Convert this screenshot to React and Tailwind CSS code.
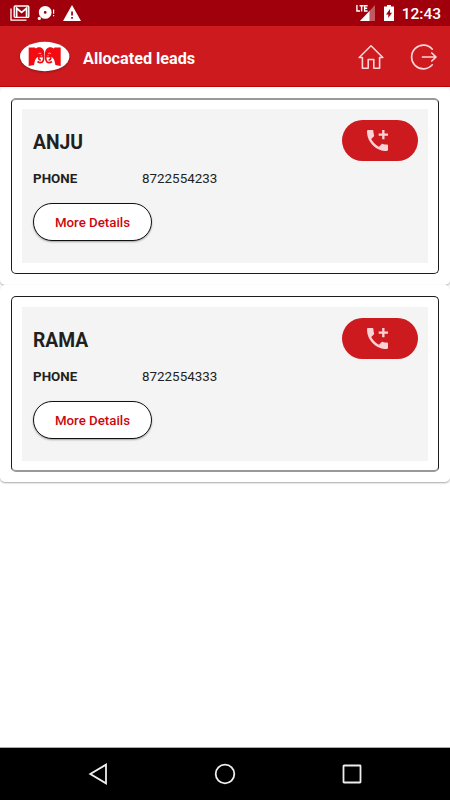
import clsx from "clsx";

const leads = [
  { id: 1, name: "ANJU", phone: "8722554233" },
  { id: 2, name: "RAMA", phone: "8722554333" },
];

const StatusBar = () => (
  <div className="flex h-[26px] shrink-0 items-center justify-between bg-[#9f000b] pl-[10px] pr-[9px] text-white">
    <div className="flex items-center">
      <svg width="20" height="16" viewBox="0 0 20 16" fill="none" stroke="currentColor">
        <path d="M1 3.5V15.2h15.5" strokeWidth="1.3" />
        <rect x="4.2" y="1" width="14.6" height="11.4" rx="1" strokeWidth="1.4" />
        <path d="M6.6 12V3.2l5 4.2 5-4.2V12" strokeWidth="1.8" />
      </svg>
      <svg width="18" height="16" viewBox="0 0 18 16" className="ml-[7px]" fill="currentColor">
        <path fillRule="evenodd" d="M8.2 1a6.4 6.4 0 1 1 0 12.8A6.4 6.4 0 0 1 8.2 1Zm0 5a1.4 1.4 0 1 0 0 2.8 1.4 1.4 0 0 0 0-2.8Z" />
        <circle cx="2.3" cy="13.4" r="1.6" />
        <path d="M16 4.5h1.2v4.2H16zM16 10h1.2v1.3H16z" />
      </svg>
      <svg width="18" height="16" viewBox="0 0 18 16" className="ml-2" fill="currentColor">
        <path fillRule="evenodd" d="M9 0l9 16H0L9 0Zm-.8 6.5v4h1.7v-4H8.2Zm0 5.5v1.7h1.7V12H8.2Z" />
      </svg>
    </div>
    <div className="flex items-center">
      <svg width="20" height="18" viewBox="0 0 20 18" fill="currentColor">
        <path d="M19 1v16H4L19 1Z" opacity=".35" />
        <path d="M13.5 6.9V17H4l9.5-10.1Z" />
        <path d="M.9 1v6H4M3.6 1.7h4M5.6 1.7V7.5M11.6 1.7H8.6V7h3M8.6 4.3h2.6" fill="none" stroke="currentColor" strokeWidth="1.4" />
      </svg>
      <svg width="10" height="16" viewBox="0 0 10 16" className="ml-2" fill="currentColor">
        <path fillRule="evenodd" d="M3 0h4v1.5h3V16H0V1.5h3V0Zm3 4L2 9.5h2.3V13L8 7.7H6V4Z" />
      </svg>
      <span className="ml-[8px] mt-[3px] text-[15.5px] font-medium leading-none">12:43</span>
    </div>
  </div>
);

const Logo = () => (
  <svg width="54" height="36" viewBox="0 0 54 36" className="drop-shadow-[0_1px_1px_rgba(0,0,0,0.3)]">
    <ellipse cx="26.7" cy="17.5" rx="24.7" ry="14.7" fill="#fff" />
    {/* two elephant heads facing each other, the right one mirrored */}
    <g id="head">
      <path
        d="M10.7 8.6h6.2l.8.8c1.200-.9 2.300-1.200 3.400-1.200 3.100 0 5.300 2.500 5.300 6.300v3.300l-3 .8-3-.7c-2 .3-3.400 2.500-3.900 5.700l-.5 2.500-5.300.9V8.600Z"
        fill="#f20c12"
      />
      <path d="M21 18c-.8 2 .3 3 1.800 2.800M25.500 17c.6 4-.6 6.600-3 6.600-1.300 0-2.200-.4-3-1.100" fill="none" stroke="#f20c12" strokeWidth="1.700" />
      <path d="M20.500 14.600c.9-.5 1.800-.5 2.700-.1M22.800 16.800h1.200" fill="none" stroke="#fff" strokeWidth=".7" />
    </g>
    <use href="#head" transform="matrix(-1 0 0 1 53.4 0)" />
  </svg>
);

const AppBar = () => (
  <header className="flex h-[61px] shrink-0 items-center border-b border-[#bd050b] bg-[#cc1a1f] pl-[18px] pr-[12px] pt-[2px] text-white">
    <Logo />
    <h1 className="ml-[11px] mt-[4px] text-[16.2px] font-bold leading-none">Allocated leads</h1>
    <div className="ml-auto flex items-center text-[#ffd5d7]">
      <svg width="26" height="26" viewBox="0 0 26 26" fill="none" stroke="currentColor" strokeWidth="1.6">
        <path d="M1.2 13.5 13 1.8l11.8 11.7h-3.2V24.2h-5.8v-8.7h-5.6v8.7H4.4V13.5H1.2Z" strokeLinejoin="round" />
      </svg>
      <svg width="28" height="26" viewBox="0 0 28 26" className="ml-[26px]" fill="none" stroke="currentColor" strokeWidth="1.7" strokeLinecap="round" strokeLinejoin="round">
        <path d="M22.3 5.2A11.8 11.8 0 1 0 22.3 20.8M12.5 13h13M21.8 9l4.2 4-4.2 4" />
      </svg>
    </div>
  </header>
);

const LeadCard = ({ lead, first }) => (
  <section
    className={clsx(
      "rounded-[5px] bg-white px-[11px] pt-[11px] shadow-[0_1px_2px_rgba(0,0,0,0.35)]",
      first ? "h-[198px]" : "h-[197px]"
    )}
  >
    <div
      className={clsx(
        "h-[176px] rounded-[5px] border border-[#1c1c1f] px-[10px]",
        first ? "border-t-2 border-t-[#999] pt-[9px]" : "border-b-2 border-b-[#999] pt-[10px]"
      )}
    >
      <div className="h-[154px] bg-[#f4f4f4] pl-[11px] pr-[10px] pt-[11px]">
        <div className="flex items-start justify-between">
          <h2 className="mt-[10px] text-[19.3px] font-bold leading-[25px] text-[#231f20]">{lead.name}</h2>
          <button type="button" className="flex h-[41px] w-[76px] items-center justify-center rounded-full bg-[#cc1a1f]" aria-label="Call">
            <svg width="21" height="21" viewBox="3 3 18 18" className="-ml-[6px]" fill="#fbd3d6">
              <path d="M20 15.5c-1.25 0-2.45-.2-3.57-.57-.35-.11-.74-.03-1.02.24l-2.2 2.2a15.05 15.05 0 0 1-6.59-6.58l2.2-2.21c.28-.27.36-.66.25-1.01A11.36 11.36 0 0 1 8.5 4c0-.55-.45-1-1-1H4c-.55 0-1 .45-1 1 0 9.39 7.61 17 17 17 .55 0 1-.45 1-1v-3.5c0-.55-.45-1-1-1Z" />
              <path d="M21 6h-3V3h-2v3h-3v2h3v3h2V8h3z" />
            </svg>
          </button>
        </div>
        <div className="mt-[10px] flex text-[13.4px] leading-[16px] text-[#231f20]">
          <span className="w-[109px] font-bold">PHONE</span>
          <span>{lead.phone}</span>
        </div>
        <button type="button" className="mt-4 h-[38px] w-[119px] rounded-full border border-[#111] bg-white pt-px text-[13.3px] font-medium text-[#cc0710] shadow-[0_1px_2px_rgba(0,0,0,0.35)]">
          More Details
        </button>
      </div>
    </div>
  </section>
);

const NavBar = () => (
  <nav className="flex h-[53px] shrink-0 items-center justify-between border-t border-[#aaa] bg-black px-[88px] text-[#eee]">
    <svg width="20" height="22" viewBox="0 0 20 22" fill="none" stroke="currentColor" strokeWidth="1.8">
      <path d="M18 1.7v18.6L2.3 11 18 1.7Z" />
    </svg>
    <svg width="22" height="22" viewBox="0 0 22 22" fill="none" stroke="currentColor" strokeWidth="1.8">
      <circle cx="11" cy="11" r="9.3" />
    </svg>
    <svg width="20" height="20" viewBox="0 0 20 20" fill="none" stroke="currentColor" strokeWidth="1.8">
      <rect x="1.5" y="1.5" width="17" height="17" rx=".5" />
    </svg>
  </nav>
);

const App = () => (
  <div className="flex h-screen w-full flex-col overflow-hidden bg-white font-['Roboto',sans-serif]">
    <StatusBar />
    <AppBar />
    <main className="flex-1">
      {leads.map((lead, i) => (
        <LeadCard key={lead.id} lead={lead} first={i === 0} />
      ))}
    </main>
    <NavBar />
  </div>
);

export default App;
